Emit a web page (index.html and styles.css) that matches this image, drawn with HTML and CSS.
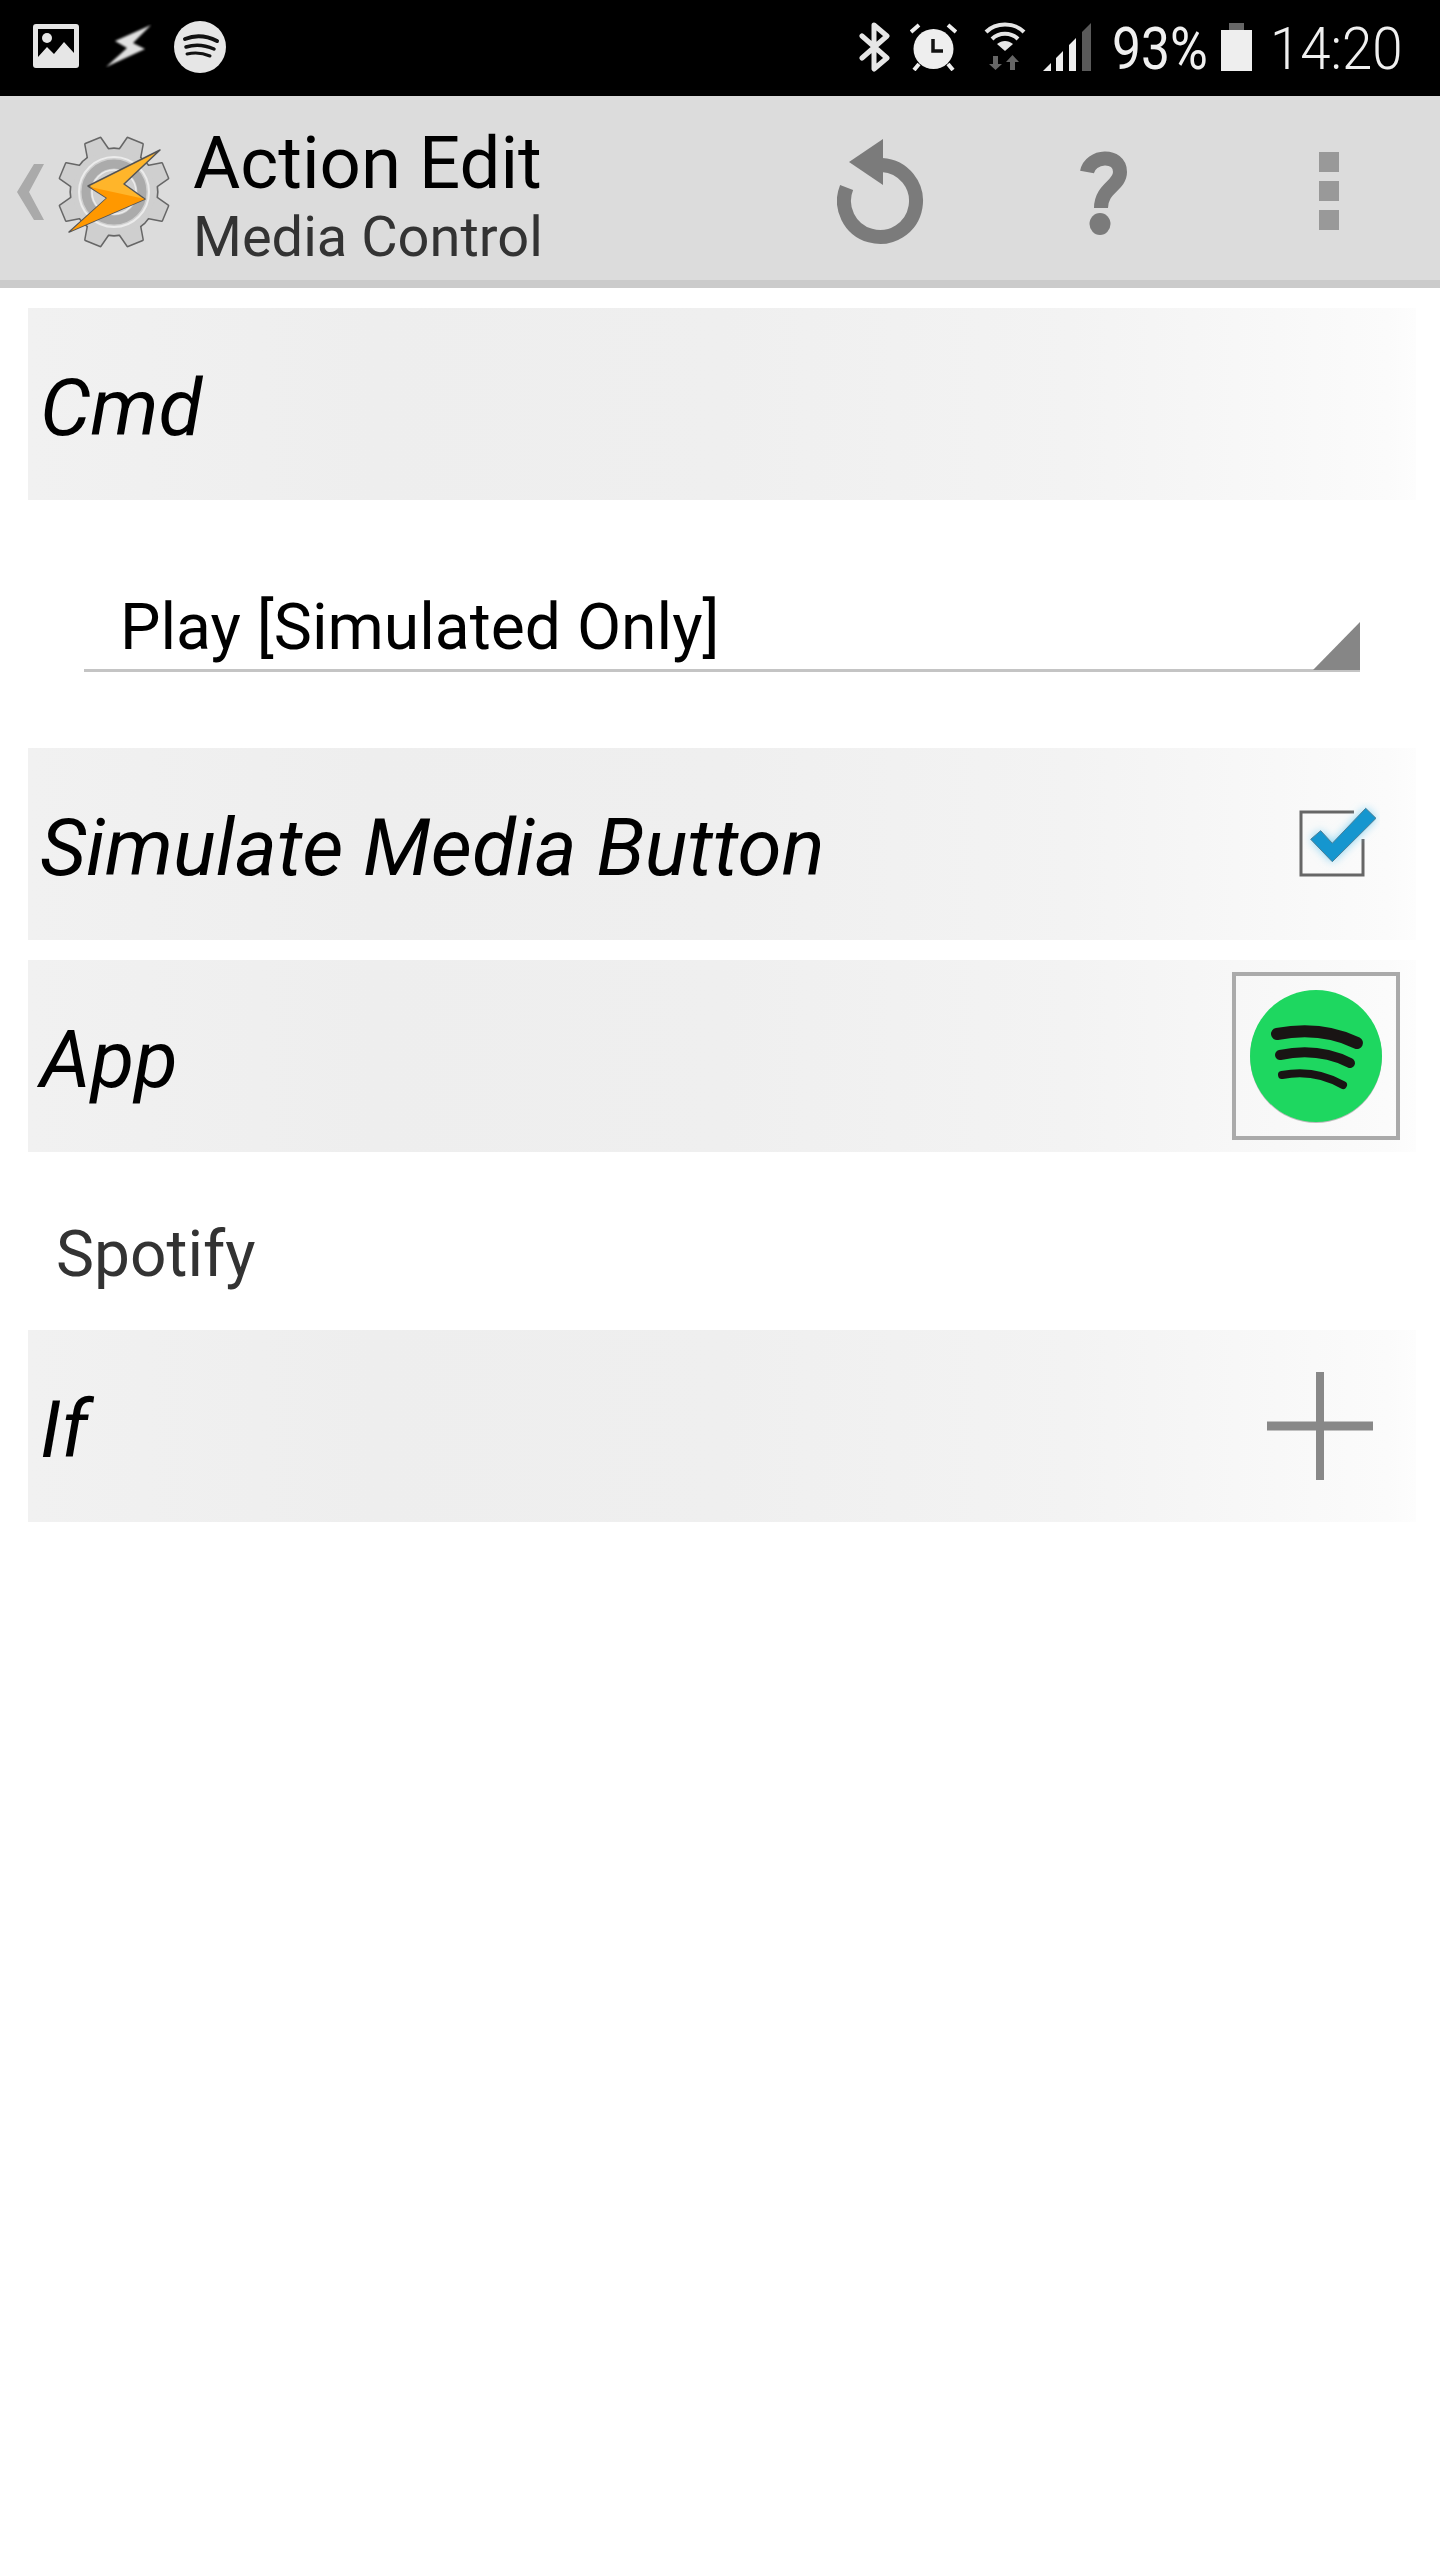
FILE: index.html
```html
<!DOCTYPE html>
<html lang="en">
<head>
<meta charset="utf-8">
<title>Action Edit</title>
<link rel="stylesheet" href="styles.css">
</head>
<body>
<div class="screen">
  <header class="status">
    <svg class="si-image" width="46" height="44" viewBox="0 0 46 44"><path fill="#e6e6e6" fill-rule="evenodd" d="M3 0H43a3 3 0 0 1 3 3V41a3 3 0 0 1-3 3H3a3 3 0 0 1-3-3V3a3 3 0 0 1 3-3ZM5 5V33L14 23L21 30L31 18L41 29V5Z"/><circle cx="14" cy="14" r="5" fill="#e6e6e6"/></svg>
    <svg class="si-bolt" width="48" height="44" viewBox="0 0 48 44"><path class="blur" fill="#e0e0e0" d="M47 1L11 17L23 24L2 43L41 25L29 19Z"/></svg>
    <svg class="si-spot" width="52" height="52" viewBox="0 0 52 52"><circle cx="26" cy="26" r="26" fill="#e6e6e6"/><g fill="none" stroke="#111" stroke-linecap="round"><path stroke-width="4" d="M11 18C21 14 33 15 43 20"/><path stroke-width="3.5" d="M12 26C21 23 31 24 40 28"/><path stroke-width="3" d="M13 33C21 31 29 32 36 35"/></g></svg>
    <svg class="si-bt" width="31" height="50" viewBox="0 0 31 50"><path fill="none" stroke="#e6e6e6" stroke-width="5" stroke-linejoin="round" stroke-linecap="round" d="M3 14L28 36L15 47V3L28 14L3 36"/></svg>
    <svg class="si-alarm" width="47" height="48" viewBox="0 0 47 48"><circle cx="23.5" cy="26" r="20" fill="#eee"/><path stroke="#eee" stroke-width="4" d="M1 9L9 2M46 9L38 2M4 47L9 41M43 47L38 41"/><path fill="none" stroke="#111" stroke-width="3.5" d="M23 16V28H33"/></svg>
    <svg class="si-wifi" width="42" height="48" viewBox="0 0 42 48"><g fill="none" stroke="#e6e6e6" stroke-width="4"><path d="M2 10C12 0 30 0 40 10"/><path d="M8 17C15 10 27 10 34 17"/></g><path fill="#e6e6e6" d="M21 29L13 22C18 18 24 18 29 22Z"/><path fill="#666" d="M9 34H14V42H18L11.500 48L5 42H9ZM26 48H31V40H35L28.500 33L22 40H26Z"/></svg>
    <svg class="si-signal" width="48" height="48" viewBox="0 0 48 48"><path fill="#eee" d="M0 48L8 40V48ZM13 35L20 28V48H13ZM26 22L33 15V48H26Z"/><path fill="#5a5a5a" d="M39 9L48 0V48H39Z"/></svg>
    <span class="st-text st-pct">93%</span>
    <svg class="si-batt" width="31" height="48" viewBox="0 0 31 48"><rect x="8" width="15" height="8" fill="#666"/><rect y="7" width="31" height="41" fill="#eee"/></svg>
    <span class="st-text st-time">14:20</span>
  </header>

  <div class="actionbar">
    <svg class="back" width="27" height="56" viewBox="0 0 27 56"><path fill="#aaa" d="M27 0H17L0 28L17 56H27L12 28Z"/></svg>
    <svg class="app-logo" width="114" height="114" viewBox="-57 -57 114 114">
      <defs>
        <polygon id="tooth" points="-11,-41 -8,-55 8,-55 11,-41"/>
      </defs>
      <g transform="rotate(22.500)" fill="#666" stroke="#666" stroke-width="3" stroke-linejoin="round">
        <circle r="43"/>
        <use href="#tooth"/><use href="#tooth" transform="rotate(45)"/><use href="#tooth" transform="rotate(90)"/><use href="#tooth" transform="rotate(135)"/><use href="#tooth" transform="rotate(180)"/><use href="#tooth" transform="rotate(225)"/><use href="#tooth" transform="rotate(270)"/><use href="#tooth" transform="rotate(315)"/>
      </g>
      <g transform="rotate(22.500)" fill="#cfcfcf">
        <circle r="43"/>
        <use href="#tooth"/><use href="#tooth" transform="rotate(45)"/><use href="#tooth" transform="rotate(90)"/><use href="#tooth" transform="rotate(135)"/><use href="#tooth" transform="rotate(180)"/><use href="#tooth" transform="rotate(225)"/><use href="#tooth" transform="rotate(270)"/><use href="#tooth" transform="rotate(315)"/>
      </g>
      <circle r="35" fill="none" stroke="#ececec" stroke-width="2"/>
      <circle r="28" fill="none" stroke="#ababab" stroke-width="9"/>
      <circle r="22" fill="none" stroke="#ececec" stroke-width="1.500"/>
      <path fill="#ffb52a" stroke="#555" stroke-width="1.500" stroke-linejoin="round" d="M46 -42L-26 -6L-7 6L-45 40L31 7L10 -8Z"/>
      <path fill="#ff9800" d="M-24 -5L31 7L-43 39L-7 6Z"/>
    </svg>
    <div class="titles">
      <div class="title">Action Edit</div>
      <div class="subtitle">Media Control</div>
    </div>
    <svg class="ab-undo" width="90" height="106" viewBox="0 0 90 106"><path fill="none" stroke="#7b7b7b" stroke-width="14" d="M9.600 48.500A36 36 0 1 0 45 26"/><path fill="#7b7b7b" d="M46 0V46L12 23Z"/></svg>
    <svg class="ab-help" width="48" height="86" viewBox="0 0 48 86"><path fill="none" stroke="#7b7b7b" stroke-width="14" d="M7 22C10 5 40 3 40 22C40 36 21 38 21 58"/><ellipse cx="20" cy="74" rx="10.500" ry="11" fill="#7b7b7b"/></svg>
    <div class="ab-more"><i></i><i></i><i></i></div>
  </div>

  <main class="form">
    <section class="row row-first"><span class="label">Cmd</span></section>
    <div class="select"><span class="select-text">Play [Simulated Only]</span></div>
    <section class="row"><span class="label">Simulate Media Button</span>
      <svg class="check" width="84" height="84" viewBox="0 0 84 84">
        <defs><filter id="glow" x="-40%" y="-40%" width="180%" height="180%"><feGaussianBlur stdDeviation="5"/></filter></defs>
        <path fill="none" stroke="#666" stroke-width="3" d="M58 10H5V73H67V37"/>
        <path fill="#7fd0f2" filter="url(#glow)" d="M14.700 37.300L24.700 28.700L36.300 41.300L69.700 6.300L80 16.300L36.300 59.700Z"/>
        <path fill="#1596cf" stroke="#4d7f96" stroke-width="1" d="M14.700 37.300L24.700 28.700L36.300 41.300L69.700 6.300L80 16.300L36.300 59.700Z"/>
      </svg>
    </section>
    <section class="row row-gap"><span class="label">App</span>
      <div class="app-box">
        <svg width="136" height="136" viewBox="0 0 136 136">
          <circle cx="68" cy="69" r="66" fill="#bbb"/>
          <circle cx="68" cy="68" r="66" fill="#1ed760"/>
          <g fill="none" stroke="#191414" stroke-linecap="round">
            <path stroke-width="12" d="M29 46C56 41 84 43 109 55"/>
            <path stroke-width="10" d="M32 67C56 62 80 64 102 75"/>
            <path stroke-width="8" d="M34 87C54 83 74 85 95 97"/>
          </g>
        </svg>
      </div>
    </section>
    <div class="app-name">Spotify</div>
    <section class="row"><span class="label">If</span>
      <svg class="plus" width="106" height="108" viewBox="0 0 106 108"><path stroke="#888" stroke-width="9" d="M0 54H106"/><path stroke="#888" stroke-width="8" d="M53 0V108"/></svg>
    </section>
  </main>
</div>
</body>
</html>
```
FILE: styles.css
```css
* { box-sizing: border-box; }
html, body { margin: 0; padding: 0; background: #fff; }
body { font-family: Roboto, "Liberation Sans", sans-serif; }
.screen { width: 1440px; height: 2560px; overflow: hidden; }

.status { height: 96px; background: #000; display: flex; align-items: flex-start; color: #f0f0f0; }
.status svg { flex: none; display: block; }
.blur { filter: blur(1.2px); }
.si-image { margin: 24px 0 0 33px; }
.si-bolt { margin: 24px 0 0 25px; }
.si-spot { margin: 21px 0 0 22px; }
.si-bt { margin: 22px 0 0 633px; }
.si-alarm { margin: 23px 0 0 20px; }
.si-wifi { margin: 22px 0 0 27px; }
.si-signal { margin: 23px 0 0 17px; }
.si-batt { margin: 23px 0 0 17px; }
.st-text { font-size: 60px; line-height: 70px; margin-top: 14px; flex: none; white-space: nowrap; transform-origin: 0 50%; }
.st-pct { width: 92px; margin-left: 21px; transform: scaleX(.86); font-weight: 400; }
.st-time { width: 127px; margin-left: 18px; transform: scaleX(.91); font-weight: 300; }

.actionbar { height: 192px; background: #dcdcdc; border-bottom: 8px solid #cbcbcb; display: flex; align-items: flex-start; }
.actionbar svg { flex: none; display: block; }
.back { margin: 68px 0 0 17px; }
.app-logo { margin: 39px 0 0 13px; }
.titles { margin: 25px 0 0 22px; width: 560px; }
.title { font-size: 72.5px; line-height: 86px; color: #000; white-space: nowrap; }
.subtitle { font-size: 56px; line-height: 60px; color: #333; white-space: nowrap; }
.ab-undo { margin: 43px 0 0 84px; }
.ab-help { margin: 54px 0 0 153px; }
.ab-more { margin: 56px 0 0 191px; width: 20px; display: flex; flex-direction: column; gap: 9px; }
.ab-more i { display: block; height: 20px; background: #999; }

.form { display: flex; flex-direction: column; }
.row { height: 192px; margin: 0 24px 0 28px; display: flex; align-items: center; justify-content: space-between;
  background: linear-gradient(90deg, #f1f1f1 0%, #eeeeee 25%, #efefef 50%, #f3f3f3 75%, #f8f8f8 90%, #fbfbfb 98%, #fdfdfd 100%); }
.row-first { margin-top: 20px; }
.row-gap { margin-top: 20px; }
.label { font-size: 80px; font-style: italic; color: #000; padding: 7px 0 0 12px; white-space: nowrap; }
.select { height: 248px; margin: 0 80px 0 84px; padding: 85px 0 0 36px; position: relative; }
.select-text { font-size: 64.2px; line-height: 85px; color: #000; display: block; height: 85px; white-space: nowrap; }
.select::before { content: ""; position: absolute; left: 0; right: 0; top: 169px; height: 3px; background: #c4c4c4; }
.select::after { content: ""; position: absolute; right: 0; top: 122px; width: 47px; height: 48px; background: #868686; clip-path: polygon(100% 0, 100% 100%, 0 100%); }
.check { margin-right: 36px; display: block; flex: none; }
.app-box { width: 168px; height: 168px; margin-right: 16px; border: 4px solid #aaa; display: flex; align-items: center; justify-content: center; flex: none; }
.app-box svg { display: block; }
.app-name { height: 178px; padding: 60px 0 0 56px; font-size: 64px; line-height: 85px; color: #333; }
.plus { margin-right: 43px; display: block; flex: none; }
```
